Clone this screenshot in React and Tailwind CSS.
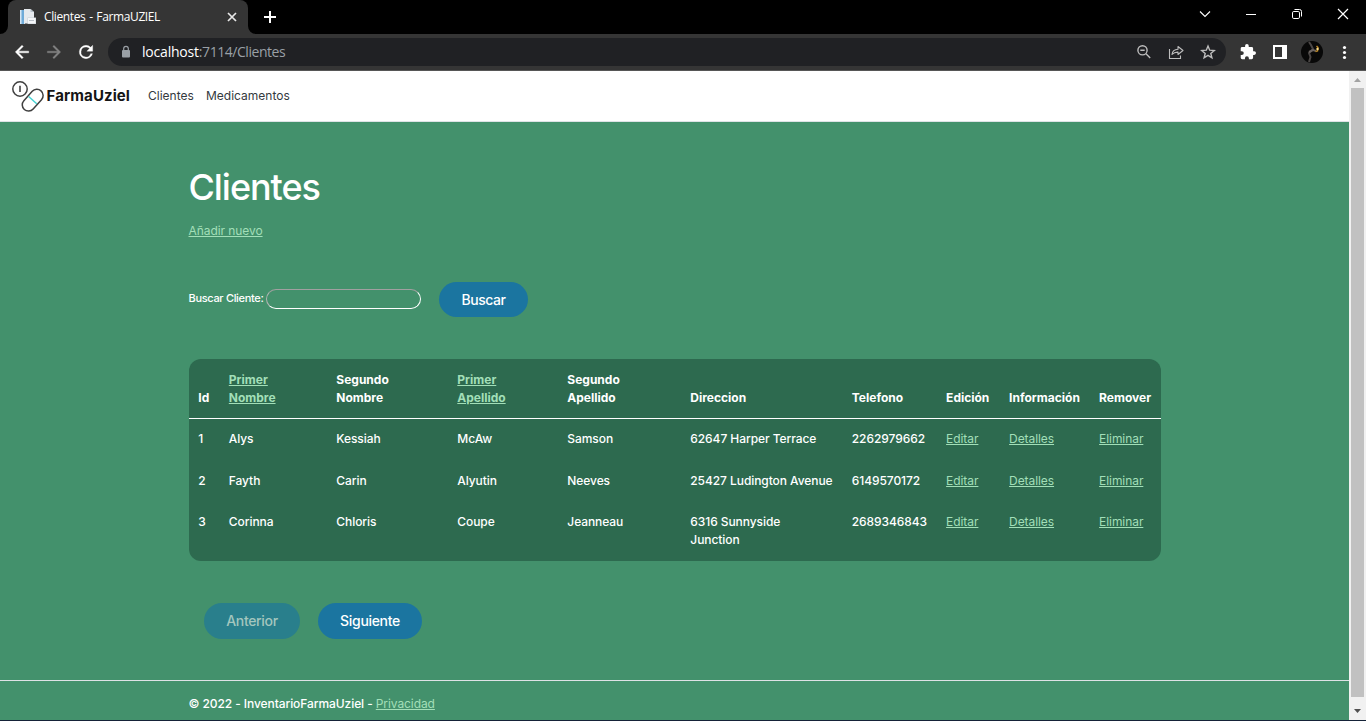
import React from "react";

const rows = [
  ["1", "Alys", "Kessiah", "McAw", "Samson", "62647 Harper Terrace", "2262979662"],
  ["2", "Fayth", "Carin", "Alyutin", "Neeves", "25427 Ludington Avenue", "6149570172"],
  ["3", "Corinna", "Chloris", "Coupe", "Jeanneau", "6316 Sunnyside\nJunction", "2689346843"],
];
const heads = [
  { text: "Id" },
  { text: "Primer Nombre", link: true },
  { text: "Segundo Nombre" },
  { text: "Primer Apellido", link: true },
  { text: "Segundo Apellido" },
  { text: "Direccion" },
  { text: "Telefono" },
  { text: "Edición" },
  { text: "Información" },
  { text: "Remover" },
];

const link = "text-[#a2dfb8] underline";
const grid = "grid grid-cols-[30.5px_107.5px_121px_110px_123px_161.5px_94.3px_63px_90px_71.2px]";

function TabStrip() {
  return (
    <div className="flex h-[34px] items-start bg-black">
      <svg className="mt-[26px] shrink-0" width="8" height="8" viewBox="0 0 8 8">
        <path d="M8 0v8H0a8 8 0 0 0 8-8z" fill="#353535" />
      </svg>
      <div className="flex h-[34px] w-60 shrink-0 items-center rounded-t-lg bg-[#353535] pl-3">
        <svg width="16" height="16" viewBox="0 0 16 16">
          <path d="M0 1h5v14H0z" fill="#d5e6f3" />
          <path d="M1.500 1h2.500v14H1.500z" fill="#6fabd8" />
          <path d="M4 0h6.500L14 3v11.500H4z" fill="#e6eaee" />
          <path d="M10.500 0L14 3h-3.500z" fill="#b8c2cb" />
          <path d="M7.500 8.500H16V15H7.500z" fill="#c9cfd5" />
          <path d="M8 9h7.500v5.500H8z" fill="#f4f6f8" />
          <path d="M9 11h5v1H9z" fill="#b9c0c8" />
        </svg>
        <span className="ml-2 w-[180px] whitespace-nowrap font-['Open_Sans',sans-serif] text-[12px] tracking-[-0.38px] text-white [word-spacing:1px]">Clientes - FarmaUZIEL</span>
        <svg className="shrink-0" width="16" height="16" viewBox="0 0 16 16" stroke="#e8e8e8" strokeWidth="1.700">
          <path d="M4 4l8 8M12 4l-8 8" />
        </svg>
      </div>
      <svg className="mt-[26px] shrink-0" width="8" height="8" viewBox="0 0 8 8">
        <path d="M0 0v8h8a8 8 0 0 1-8-8z" fill="#353535" />
      </svg>
      <svg className="ml-[6px] mt-[9px] shrink-0" width="16" height="16" viewBox="0 0 16 16" stroke="#fff" strokeWidth="2">
        <path d="M8 2v12M2 8h12" />
      </svg>
      <div className="ml-auto flex pt-[6px]">
        <svg width="46" height="16" viewBox="0 0 46 16" fill="none" stroke="#fff" strokeWidth="1.100"><path d="M18 5.500l5 5 5-5" /></svg>
        <svg width="46" height="16" viewBox="0 0 46 16" stroke="#fff"><path d="M18 8.500h10" /></svg>
        <svg width="46" height="16" viewBox="0 0 46 16" fill="none" stroke="#fff">
          <rect x="18.500" y="5.500" width="7" height="7" rx="1.300" />
          <path d="M20.500 3.500h5a2 2 0 0 1 2 2v5" />
        </svg>
        <svg width="46" height="16" viewBox="0 0 46 16" stroke="#fff" strokeWidth="1.200"><path d="M18 3l10 10M28 3l-10 10" /></svg>
      </div>
    </div>
  );
}

function Toolbar() {
  return (
    <div className="flex h-[37px] items-center border-b border-[#565656] bg-[#353535]">
      <svg className="ml-3 shrink-0" width="20" height="20" viewBox="0 0 24 24" fill="#fff" stroke="#fff" strokeWidth=".5"><path d="M20 11H7.830l5.590-5.590L12 4l-8 8 8 8 1.410-1.410L7.830 13H20v-2z" /></svg>
      <svg className="ml-3 shrink-0" width="20" height="20" viewBox="0 0 24 24" fill="#838383" stroke="#838383" strokeWidth=".4"><path d="M12 4l-1.410 1.410L16.170 11H4v2h12.170l-5.580 5.590L12 20l8-8z" /></svg>
      <svg className="ml-3 shrink-0" width="20" height="20" viewBox="0 0 24 24" fill="#fff"><path d="M17.650 6.350A7.960 7.960 0 0 0 12 4a8 8 0 1 0 7.730 10h-2.080A6 6 0 1 1 12 6c1.660 0 3.140.690 4.220 1.780L13 11h7V4z" stroke="#fff" strokeWidth=".4" /></svg>
      <div className="ml-3 flex h-7 w-[1118px] shrink-0 items-center rounded-full bg-[#202124] pl-3">
        <svg className="shrink-0" width="12" height="14" viewBox="0 0 12 14">
          <rect x="2" y="5" width="8" height="7.500" rx="1" fill="#9aa0a6" />
          <path d="M3.700 5.500V3.600a2.300 2.300 0 0 1 4.600 0v1.900" fill="none" stroke="#9aa0a6" strokeWidth="1.200" />
        </svg>
        <span className="ml-[10px] whitespace-nowrap pb-px font-['Open_Sans',sans-serif] text-[14px] tracking-[-0.45px] text-[#9aa0a6]"><span className="tracking-[-0.2px] text-white">localhost</span>:7114/Clientes</span>
        <div className="ml-auto mr-[10px] flex items-center gap-4 text-[#bdbdbd]">
          <svg width="16" height="16" viewBox="0 0 16 16" fill="none" stroke="currentColor" strokeWidth="1.400"><circle cx="6.500" cy="6.300" r="4.600" /><path d="M10 9.800l4.200 4.200M4.300 6.300h4.400" /></svg>
          <svg width="16" height="16" viewBox="0 0 16 16" fill="none" stroke="currentColor" strokeWidth="1.100"><path d="M1.500 5v9.500h11V11.500" /><path d="M4 10.500c.4-3.300 2.300-5 6-5.200V2.500L15 6.500l-5 4V8.100C7.300 8 5.500 8.800 4 10.500z" strokeLinejoin="round" /></svg>
          <svg width="16" height="16" viewBox="0 0 16 16" fill="none" stroke="currentColor" strokeWidth="1.400"><path d="M8 2l1.700 4.200 4.600.3-3.500 2.900 1.100 4.400L8 11.400l-3.900 2.400 1.100-4.400L1.700 6.500l4.600-.3z" /></svg>
        </div>
      </div>
      <svg className="ml-[14px] shrink-0" width="16" height="16" viewBox="1 1 22 22" fill="#fff"><path d="M20.500 11H19V7a2 2 0 0 0-2-2h-4V3.500a2.500 2.500 0 0 0-5 0V5H4a2 2 0 0 0-2 2v3.800h1.500a2.700 2.700 0 0 1 0 5.400H2V20a2 2 0 0 0 2 2h3.800v-1.500a2.700 2.700 0 0 1 5.400 0V22H17a2 2 0 0 0 2-2v-4h1.500a2.500 2.500 0 0 0 0-5z" /></svg>
      <svg className="ml-[17px] shrink-0" width="14" height="14" viewBox="0 0 14 14"><path d="M0 0h14v14H0z" fill="#fff" /><path d="M2 2h7v10H2z" fill="#353535" /></svg>
      <svg className="ml-[14px] shrink-0" width="22" height="22" viewBox="0 0 22 22">
        <circle cx="11" cy="11" r="11" fill="#080808" />
        <path d="M8 1l2 3 2 4-4 4 1.500 4-1.500 5" stroke="#4a4645" strokeWidth="2" fill="none" />
        <path d="M8 11l4-2 3 1" stroke="#6a6360" strokeWidth="2" fill="none" />
        <path d="M15.500 5l1.500 1.500-.5 3.500-2 .5" stroke="#b58225" strokeWidth="1.500" fill="none" />
        <circle cx="16.500" cy="8" r="1.200" fill="#ffe28a" />
      </svg>
      <svg className="ml-[13px] shrink-0" width="16" height="16" viewBox="0 0 16 16" fill="#fff"><circle cx="8.500" cy="3.500" r="1.600" /><circle cx="8.500" cy="8.500" r="1.600" /><circle cx="8.500" cy="13.500" r="1.600" /></svg>
    </div>
  );
}

function Navbar() {
  return (
    <nav className="flex h-[51px] items-center border-b border-[#dee2e6] bg-white">
      <svg className="ml-[11px] shrink-0" width="34" height="34" viewBox="0 0 34 34" fill="none" stroke="#404040" strokeWidth="1.500">
        <circle cx="9" cy="10" r="7.200" />
        <path d="M9 6.800v6.200" strokeWidth="1.600" />
        <g transform="rotate(-48 21.500 21)">
          <rect x="9" y="15" width="25" height="12.500" rx="6.250" />
          <path d="M21.500 15.800v10.900" stroke="#45d3d3" strokeWidth="1.500" />
        </g>
      </svg>
      <span className="ml-[1.500px] w-[101.500px] whitespace-nowrap text-[15px] font-bold tracking-[0.1px] text-[#151515]">FarmaUziel</span>
      <span className="w-[58px] text-[12px] text-[#343a40]">Clientes</span>
      <span className="text-[12px] text-[#343a40]">Medicamentos</span>
    </nav>
  );
}

function ClientTable() {
  return (
    <div className="mt-[42px] h-[202px] w-[972px] overflow-hidden rounded-xl bg-[#2d6a4f] text-[12px] leading-[18px] text-white">
      <div className={grid + " h-[60px] items-end border-b border-white pb-[11px] font-bold"}>
        {heads.map((h) => (
          <div key={h.text} className="pl-[9.300px]">
            <span className={h.link ? "block w-[60px] " + link : h.text.startsWith("Segundo") ? "block w-[60px]" : ""}>{h.text}</span>
          </div>
        ))}
      </div>
      {rows.map((r) => (
        <div key={r[0]} className={grid + " h-[41.5px] items-start pt-[11px] font-[450] tracking-[-0.07px]"}>
          {r.map((c, i) => <div key={i} className="whitespace-pre pl-[9.300px]">{c}</div>)}
          {["Editar", "Detalles", "Eliminar"].map((a) => <div key={a} className="pl-[9.300px] font-normal"><a className={link}>{a}</a></div>)}
        </div>
      ))}
    </div>
  );
}

function Scrollbar() {
  return (
    <div className="flex w-[17px] shrink-0 flex-col items-center bg-[#f1f1f1]">
      <svg width="17" height="17" viewBox="0 0 17 17" fill="#a3a3a3"><path d="M5 11l3.500-4 3.500 4z" /></svg>
      <div className="h-[609px] w-[13px] bg-[#c1c1c1]" />
      <svg className="mt-[6px]" width="17" height="17" viewBox="0 0 17 17" fill="#505050"><path d="M5 6l3.500 4L12 6z" /></svg>
    </div>
  );
}

export default function App() {
  return (
    <div className="flex h-[721px] w-[1366px] flex-col overflow-hidden font-['Inter',sans-serif]">
      <TabStrip />
      <Toolbar />
      <div className="flex h-[649px] shrink-0">
        <div className="flex flex-1 flex-col bg-[#43916c]">
          <Navbar />
          <main className="flex-1 pl-[188.500px]">
            <h1 className="mt-11 text-[36px] font-medium leading-[43px] tracking-[-1.050px] text-white">Clientes</h1>
            <p className="mt-[13px] text-[12px] leading-[18px] tracking-[-0.070px]"><a className={link}>Añadir nuevo</a></p>
            <div className="mt-[41px] flex h-9 items-center">
              <label className="w-[77.500px] whitespace-nowrap pb-[2px] text-[11px] font-[450] tracking-[-0.32px] text-white">Buscar Cliente:</label>
              <input className="h-5 w-[155px] rounded-[10px] border border-b-white border-l-[#b5b5b5] border-r-white border-t-[#a0a0a0] bg-transparent" />
              <button className="ml-[18px] h-[35px] w-[89px] rounded-full bg-[#1b75a0] text-[14px] font-[450] tracking-[-0.45px] text-white">Buscar</button>
            </div>
            <div className="pl-[0.500px]"><ClientTable /></div>
            <div className="ml-[15.500px] mt-[42px] flex gap-[18px] text-[14px] font-[450] tracking-[-0.32px]">
              <button className="h-9 w-24 rounded-full bg-[#297f8c] pb-px text-[#a4c6be]">Anterior</button>
              <button className="h-9 w-[104px] rounded-full bg-[#1b75a0] pb-px text-white">Siguiente</button>
            </div>
          </main>
          <footer className="flex h-10 items-center border-t border-[#dee2e6] pl-[188.500px] pt-[6px] text-[12px] font-[450] tracking-[-0.080px] text-white">
            <span className="whitespace-pre">© 2022 - InventarioFarmaUziel - <a className={link + " font-normal"}>Privacidad</a></span>
          </footer>
        </div>
        <Scrollbar />
      </div>
      <div className="h-px bg-[#152238]" />
    </div>
  );
}
